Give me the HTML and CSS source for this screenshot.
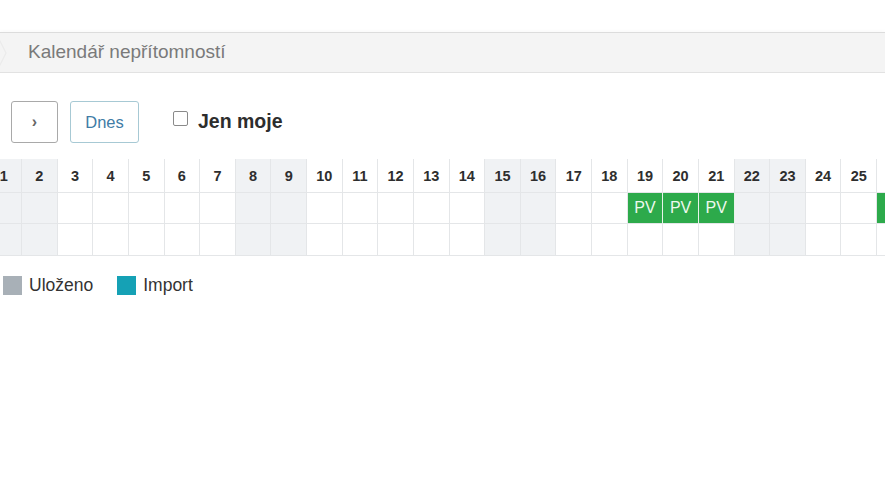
FILE: index.html
```html
<!DOCTYPE html>
<html lang="cs">
<head>
<meta charset="utf-8">
<title>Kalendář nepřítomností</title>
<link rel="stylesheet" href="styles.css">
</head>
<body>
<div class="page">
  <div class="crumbs">
    <svg class="crumb-arrow" width="8" height="40" viewBox="0 0 8 40"><path d="M-4 0 L6 20 L-4 40" fill="none" stroke="#ebebeb" stroke-width="1.2"/></svg>
    <span class="crumb-text">Kalendář nepřítomností</span>
  </div>
  <div class="toolbar">
    <button class="btn btn-next" type="button">&rsaquo;</button>
    <button class="btn btn-today" type="button">Dnes</button>
    <label class="mine"><span class="box"></span><span class="mine-text">Jen moje</span></label>
  </div>
  <div class="cal-wrap">
    <div class="cal">
      <div class="c h wk">1</div><div class="c h wk">2</div><div class="c h">3</div><div class="c h">4</div><div class="c h">5</div><div class="c h">6</div><div class="c h">7</div><div class="c h wk">8</div><div class="c h wk">9</div><div class="c h">10</div><div class="c h">11</div><div class="c h">12</div><div class="c h">13</div><div class="c h">14</div><div class="c h wk">15</div><div class="c h wk">16</div><div class="c h">17</div><div class="c h">18</div><div class="c h">19</div><div class="c h">20</div><div class="c h">21</div><div class="c h wk">22</div><div class="c h wk">23</div><div class="c h">24</div><div class="c h">25</div><div class="c h"></div>

      <div class="c wk"></div><div class="c wk"></div><div class="c"></div><div class="c"></div><div class="c"></div><div class="c"></div><div class="c"></div><div class="c wk"></div><div class="c wk"></div><div class="c"></div><div class="c"></div><div class="c"></div><div class="c"></div><div class="c"></div><div class="c wk"></div><div class="c wk"></div><div class="c"></div><div class="c"></div><div class="c pv">PV</div><div class="c pv">PV</div><div class="c pv">PV</div><div class="c wk"></div><div class="c wk"></div><div class="c"></div><div class="c"></div><div class="c pv"></div>

      <div class="c wk"></div><div class="c wk"></div><div class="c"></div><div class="c"></div><div class="c"></div><div class="c"></div><div class="c"></div><div class="c wk"></div><div class="c wk"></div><div class="c"></div><div class="c"></div><div class="c"></div><div class="c"></div><div class="c"></div><div class="c wk"></div><div class="c wk"></div><div class="c"></div><div class="c"></div><div class="c"></div><div class="c"></div><div class="c"></div><div class="c wk"></div><div class="c wk"></div><div class="c"></div><div class="c"></div><div class="c"></div>
    </div>
  </div>
  <div class="legend">
    <span class="sw sw-saved"></span><span class="lg-text">Uloženo</span>
    <span class="sw sw-import"></span><span class="lg-text">Import</span>
  </div>
</div>
</body>
</html>
```
FILE: styles.css
```css
html, body {
  margin: 0;
  padding: 0;
  background: #fff;
}
body {
  font-family: "Liberation Sans", Arial, sans-serif;
  color: #333;
  overflow: hidden;
  width: 885px;
  height: 502px;
}
.page {
  padding-top: 32px;
}
.crumbs {
  height: 39px;
  background: #f4f4f4;
  border-top: 1px solid #dcdcdc;
  border-bottom: 1px solid #e2e2e2;
  display: flex;
  align-items: center;
  box-shadow: 0 -2px 3px rgba(0,0,0,0.02);
}
.crumb-arrow {
  flex: none;
  margin-right: 20px;
}
.crumb-text {
  font-size: 19px;
  color: #7a7a7a;
  padding-bottom: 1px;
}
.toolbar {
  display: flex;
  align-items: center;
  margin-top: 28px;
  padding-left: 11px;
  height: 42px;
}
.btn {
  height: 42px;
  box-sizing: border-box;
  background: #fff;
  border-radius: 3px;
  font-family: "Liberation Sans", Arial, sans-serif;
  padding: 0;
  cursor: pointer;
}
.btn-next {
  width: 47px;
  border: 1px solid #a9a9a9;
  color: #666;
  font-size: 16px;
  font-weight: bold;
}
.btn-today {
  width: 69px;
  margin-left: 12px;
  border: 1px solid #a7c9d4;
  color: #3f7ca6;
  font-size: 16.5px;
}
.mine {
  display: flex;
  align-items: center;
  margin-left: 34px;
  margin-top: -2px;
}
.box {
  width: 13px;
  height: 13px;
  border: 1px solid #8a8a8a;
  border-radius: 2px;
  background: #fff;
  margin-top: -6px;
}
.mine-text {
  margin-left: 10px;
  font-size: 19.5px;
  font-weight: bold;
  color: #2d2d2d;
}
.cal-wrap {
  margin-top: 16px;
  overflow: hidden;
  width: 885px;
}
.cal {
  display: grid;
  grid-template-columns: repeat(26, 35.64px);
  grid-template-rows: 34px 31px 32px;
  margin-left: -13.6px;
  width: max-content;
}
.c {
  box-sizing: border-box;
  border-right: 1px solid #e4e6e8;
  border-bottom: 1px solid #e4e6e8;
  background: #fff;
  display: flex;
  align-items: center;
  justify-content: center;
}
.c.h {
  font-weight: bold;
  font-size: 14.5px;
  color: #2e2e2e;
  padding-top: 1px;
}
.c.wk {
  background: #f0f2f4;
}
.c.pv {
  background: #2daa4b;
  color: #eef8ee;
  font-size: 16px;
  border-right-color: #e9f3ea;
}
.legend {
  display: flex;
  align-items: center;
  margin-top: 20px;
  padding-left: 3px;
  height: 19px;
}
.sw {
  width: 19px;
  height: 19px;
  flex: none;
}
.sw-saved { background: #a8b0b7; }
.sw-import { background: #15a1b5; margin-left: 24px; }
.lg-text {
  margin-left: 7px;
  font-size: 17.5px;
  color: #333;
}
```
